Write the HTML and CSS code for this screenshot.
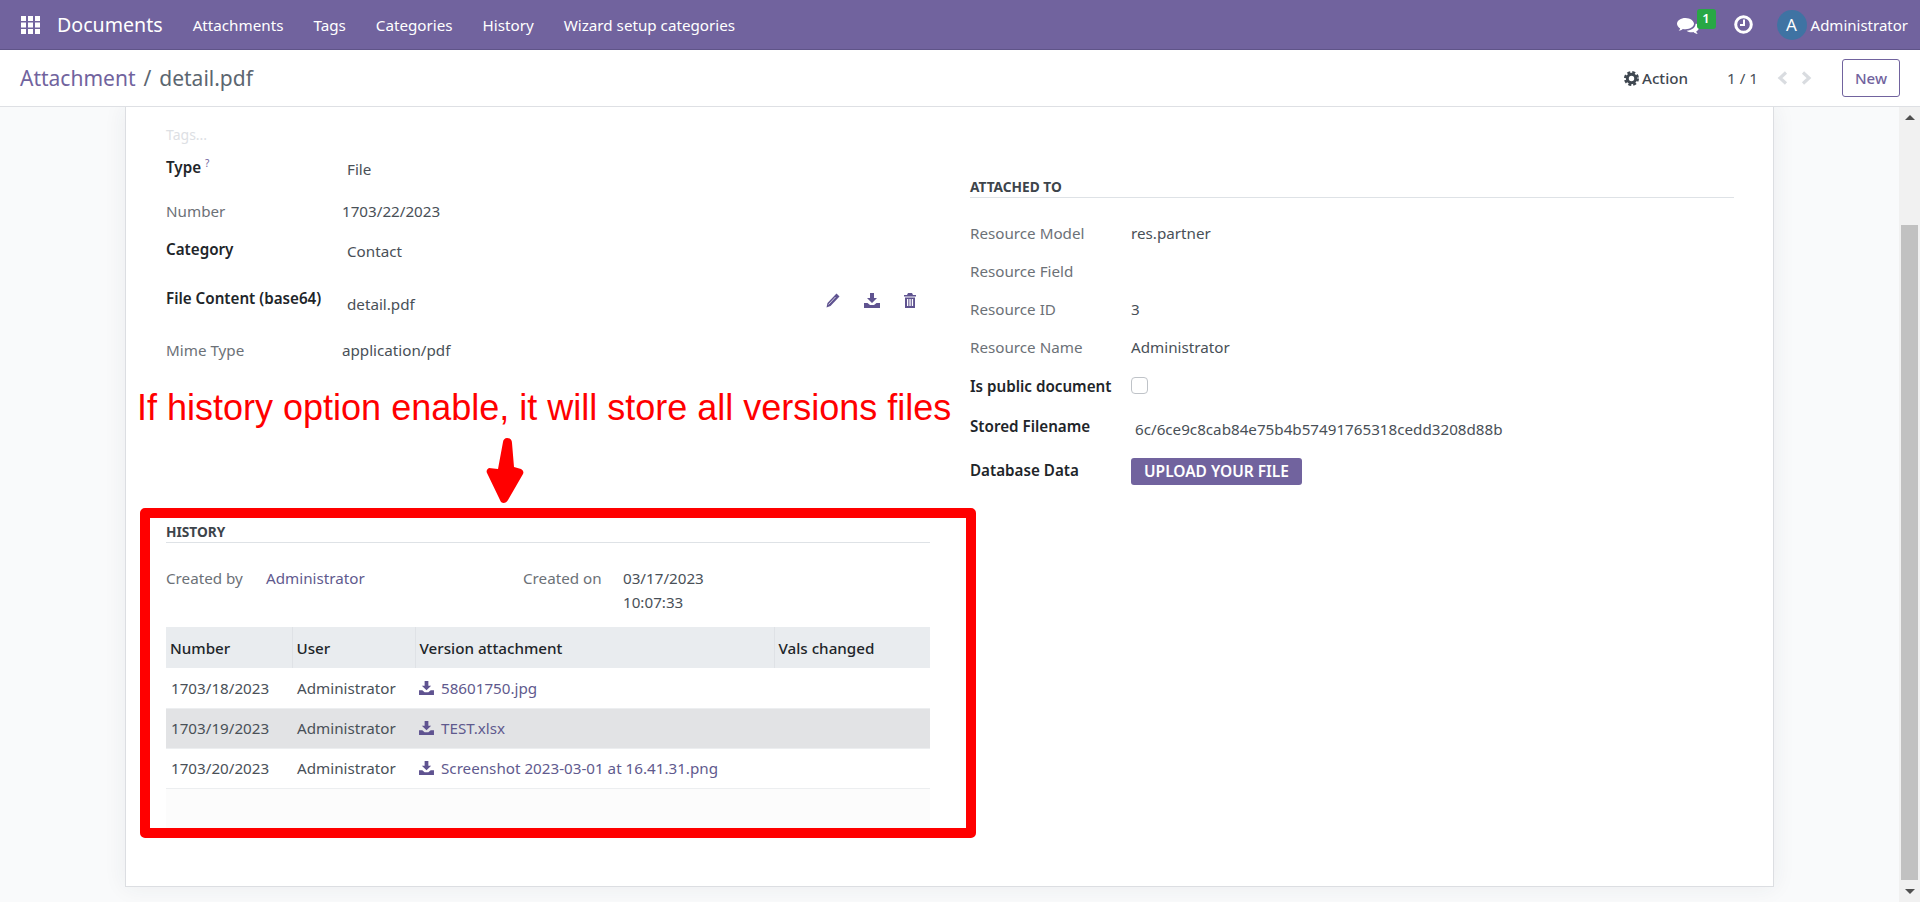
FILE: index.html
```html
<!DOCTYPE html>
<html lang="en">
<head>
    <meta charset="UTF-8">
    <title>Attachment / detail.pdf</title>
    <link rel="stylesheet" href="styles.css">
</head>
<body>
    <!-- top navbar -->
    <header class="navbar">
        <svg class="apps-icon" width="19" height="18" viewBox="0 0 19 18" fill="#fff">
            <rect x="0" y="0" width="5" height="5"/><rect x="7" y="0" width="5" height="5"/><rect x="14" y="0" width="5" height="5"/>
            <rect x="0" y="6.5" width="5" height="5"/><rect x="7" y="6.5" width="5" height="5"/><rect x="14" y="6.5" width="5" height="5"/>
            <rect x="0" y="13" width="5" height="5"/><rect x="7" y="13" width="5" height="5"/><rect x="14" y="13" width="5" height="5"/>
        </svg>
        <span class="brand">Documents</span>
        <nav class="menu">
            <a>Attachments</a>
            <a>Tags</a>
            <a>Categories</a>
            <a>History</a>
            <a>Wizard setup categories</a>
        </nav>
        <div class="systray">
            <div class="chat">
                <svg width="22" height="17" viewBox="0 0 22 17" fill="#fff">
                    <path d="M8.5 0C3.8 0 0 2.6 0 5.8c0 1.9 1.3 3.5 3.2 4.6-.3.9-.8 1.7-1.5 2.4 1.5-.3 3-1 4.1-1.9.9.2 1.8.3 2.7.3 4.7 0 8.5-2.4 8.5-5.4S13.200 0 8.500 0z"/>
                    <path d="M18.600 5.800c.1 3.700-3.800 6.700-9 6.900 1.300 1 3.100 1.500 5 1.500.6 0 1.200-.1 1.800-.2 1 .9 2.600 1.700 4.300 2-.7-.7-1.200-1.600-1.500-2.500 1.700-1 2.800-2.400 2.800-4 0-1.500-1-2.900-2.400-3.700z"/>
                </svg>
                <span class="chat-badge">1</span>
            </div>
            <svg class="clock" width="19" height="19" viewBox="0 0 19 19" fill="none" stroke="#fff">
                <circle cx="9.500" cy="9.500" r="7.800" stroke-width="3"/>
                <path d="M10 4.500v5.500H6" stroke-width="2"/>
            </svg>
            <span class="avatar">A</span>
            <span class="user-name">Administrator</span>
        </div>
    </header>

    <!-- breadcrumb and buttons -->
    <div class="control-panel">
        <div class="breadcrumb"><a>Attachment</a><span class="slash">/</span><span>detail.pdf</span></div>
        <div class="action">
            <svg width="15" height="15" viewBox="0 0 15 15">
                <circle cx="7.500" cy="7.500" r="4.200" fill="none" stroke="#3f4750" stroke-width="3"/>
                <circle cx="7.500" cy="7.500" r="6.300" fill="none" stroke="#3f4750" stroke-width="2.400" stroke-dasharray="2.950 2"/>
            </svg>
            <span>Action</span>
        </div>
        <div class="pager">1 / 1</div>
        <svg class="pager-arrow pager-prev" width="14" height="14" viewBox="0 0 14 14" fill="none" stroke="#d9dce0" stroke-width="3.200"><path d="M10 1.500 4 7l6 5.500"/></svg>
        <svg class="pager-arrow" width="14" height="14" viewBox="0 0 14 14" fill="none" stroke="#d9dce0" stroke-width="3.200"><path d="M4 1.500 10 7l-6 5.500"/></svg>
        <button class="btn-new">New</button>
    </div>

    <div class="content">
        <main class="sheet-wrap">
            <div class="sheet">
                <div class="left-col">
                    <div class="tags-row">Tags...</div>
                    <div class="field type-row">
                        <label class="strong">Type <sup>?</sup></label>
                        <span class="value indent">File</span>
                    </div>
                    <div class="field number-row">
                        <label>Number</label>
                        <span class="value">1703/22/2023</span>
                    </div>
                    <div class="field category-row">
                        <label class="strong">Category</label>
                        <span class="value indent">Contact</span>
                    </div>
                    <div class="field file-row">
                        <label class="strong">File Content (base64)</label>
                        <span class="value indent">detail.pdf</span>
                        <div class="file-actions">
                            <svg width="14" height="15" viewBox="0 0 14 15" fill="#5f5390"><path d="M10.500 0.500 13.500 3.500 4.500 13 0.500 14.500 1.500 10z"/><path d="M2.500 11.500 9.500 4" stroke="#fff" stroke-width=".7"/></svg>
                            <svg width="16" height="15" viewBox="0 0 16 15" fill="#5f5390"><path class="dl" d="M6 0h4v5h3L8 10 3 5h3z"/><path d="M0 10h3.500L6 12h4l2.500-2H16v5H0z"/></svg>
                            <svg width="12" height="15" viewBox="0 0 12 15" fill="#5f5390"><path d="M4 0h4l1 2h3v1.500H0V2h3z"/><path d="M1 4.500h10V15H1zM3 6v7h1.300V6zm2.400 0v7h1.300V6zM7.800 6v7h1.300V6z" fill-rule="evenodd"/></svg>
                        </div>
                    </div>
                    <div class="field mime-row">
                        <label>Mime Type</label>
                        <span class="value">application/pdf</span>
                    </div>

                    <p class="note">If history option enable, it will store all versions files</p>
                    <svg class="note-arrow" width="38" height="67" viewBox="0 0 38 67" fill="#f00">
                        <path d="M21 1c3 0 5 2 5 5l2 24 7 2c2 1 3 3 2 5L22 63c-2 4-7 4-8 0L1 36c-1-2 0-4 2-5l9 1L17 5c0-2 2-4 4-4z"/>
                    </svg>

                    <section class="history-box">
                        <h3 class="group-title">History</h3>
                        <div class="created">
                            <span class="muted">Created by</span>
                            <a>Administrator</a>
                            <span class="muted">Created on</span>
                            <span>03/17/2023<br>10:07:33</span>
                        </div>
                        <table class="versions">
                            <colgroup>
                                <col class="col-number"><col class="col-user"><col class="col-file"><col>
                            </colgroup>
                            <thead>
                                <tr><th>Number</th><th>User</th><th>Version attachment</th><th>Vals changed</th></tr>
                            </thead>
                            <tbody>
                                <tr>
                                    <td>1703/18/2023</td><td>Administrator</td>
                                    <td><a><svg width="15" height="14" viewBox="0 0 16 15" fill="#5f5390"><path d="M6 0h4v5h3L8 10 3 5h3z"/><path d="M0 10h3.500L6 12h4l2.500-2H16v5H0z"/></svg>58601750.jpg</a></td><td></td>
                                </tr>
                                <tr class="shaded">
                                    <td>1703/19/2023</td><td>Administrator</td>
                                    <td><a><svg width="15" height="14" viewBox="0 0 16 15" fill="#5f5390"><path d="M6 0h4v5h3L8 10 3 5h3z"/><path d="M0 10h3.500L6 12h4l2.500-2H16v5H0z"/></svg>TEST.xlsx</a></td><td></td>
                                </tr>
                                <tr>
                                    <td>1703/20/2023</td><td>Administrator</td>
                                    <td><a><svg width="15" height="14" viewBox="0 0 16 15" fill="#5f5390"><path d="M6 0h4v5h3L8 10 3 5h3z"/><path d="M0 10h3.500L6 12h4l2.500-2H16v5H0z"/></svg>Screenshot 2023-03-01 at 16.41.31.png</a></td><td></td>
                                </tr>
                            </tbody>
                        </table>
                        <div class="table-foot"></div>
                    </section>
                </div>

                <div class="right-col">
                    <h3 class="group-title">Attached To</h3>
                    <div class="rfield"><label>Resource Model</label><span class="value">res.partner</span></div>
                    <div class="rfield"><label>Resource Field</label></div>
                    <div class="rfield"><label>Resource ID</label><span class="value">3</span></div>
                    <div class="rfield"><label>Resource Name</label><span class="value">Administrator</span></div>
                    <div class="rfield"><label class="strong">Is public document</label><span class="checkbox"></span></div>
                    <div class="rfield stored-row"><label class="strong">Stored Filename</label><span class="value">6c/6ce9c8cab84e75b4b57491765318cedd3208d88b</span></div>
                    <div class="rfield db-row"><label class="strong">Database Data</label><button class="btn-upload">Upload your file</button></div>
                </div>
            </div>
        </main>

        <!-- page scrollbar -->
        <div class="scrollbar">
            <div class="scroll-btn"><i class="arrow-up"></i></div>
            <div class="scroll-space"></div>
            <div class="scroll-thumb"></div>
            <div class="scroll-btn"><i class="arrow-down"></i></div>
        </div>
    </div>
</body>
</html>
```

FILE: styles.css
```css
* {
    box-sizing: border-box;
}
html, body {
    height: 100%;
}
body {
    margin: 0;
    display: flex;
    flex-direction: column;
    overflow: hidden;
    font-family: "Noto Sans", "Open Sans", sans-serif;
    font-size: 15.2px;
    color: #495057;
    background: #f9fafb;
}
a {
    color: #5f5a8e;
}

/* navbar */
.navbar {
    flex: 0 0 50px;
    display: flex;
    align-items: center;
    background: #71639e;
    border-bottom: 1px solid #5f5488;
    color: #fff;
    padding: 0 12px 0 21px;
}
.apps-icon {
    margin-right: 17px;
}
.brand {
    font-size: 19.6px;
    margin-right: 30px;
}
.menu {
    display: flex;
    gap: 30px;
}
.menu a {
    color: #fff;
}
.systray {
    margin-left: auto;
    display: flex;
    align-items: center;
}
.chat {
    position: relative;
    width: 40px;
    height: 30px;
    padding-top: 8px;
}
.chat-badge {
    position: absolute;
    left: 20px;
    top: -1px;
    width: 19px;
    height: 20px;
    border-radius: 3px;
    background: #28a745;
    font-size: 13px;
    font-weight: 600;
    line-height: 19px;
    text-align: center;
}
.clock {
    margin-left: 17px;
}
.avatar {
    width: 30px;
    height: 30px;
    margin-left: 24px;
    border-radius: 50%;
    background: #3f73a3;
    text-align: center;
    font-size: 17px;
    line-height: 30px;
}
.user-name {
    margin-left: 4px;
    font-size: 15px;
}

/* control panel */
.control-panel {
    flex: 0 0 57px;
    display: flex;
    align-items: center;
    background: #fff;
    border-bottom: 1px solid #dee0e4;
    padding: 0 20px;
}
.breadcrumb {
    font-size: 21px;
    margin-right: auto;
}
.breadcrumb a {
    color: #71639e;
}
.breadcrumb span {
    color: #5c6670;
}
.breadcrumb .slash {
    margin: 0 8px;
}
.action {
    display: flex;
    align-items: center;
    gap: 3px;
    font-weight: 500;
    color: #3f4750;
}
.pager {
    margin-left: 39px;
    margin-right: 18px;
}
.pager-arrow {
    margin-right: 12px;
}
.pager-prev {
    margin-right: 9px;
}
.btn-new {
    width: 58px;
    height: 38px;
    margin-left: 17px;
    background: #fff;
    border: 1px solid #71639e;
    border-radius: 3px;
    color: #71639e;
    font: 500 15px "Noto Sans", sans-serif;
}

/* page content */
.content {
    flex: 1;
    display: flex;
    min-height: 0;
}
.sheet-wrap {
    flex: 1;
    padding: 0 125px;
    overflow: hidden;
}
.sheet {
    height: 780px;
    display: flex;
    padding: 16px 0 0 14px;
    background: #fff;
    border: 1px solid #dcdee2;
    border-top: 0;
    box-shadow: 0 0 22px rgba(40, 50, 70, .07);
}
label {
    color: #6c7177;
}
label.strong {
    color: #212529;
    font-weight: 600;
}
.muted {
    color: #6c7177;
}

/* left column */
.left-col {
    flex: 0 0 836px;
}
.tags-row {
    height: 24px;
    padding-left: 26px;
    font-size: 14px;
    line-height: 24px;
    color: #dde0e4;
}
.field {
    display: flex;
    align-items: center;
    padding-left: 26px;
}
.field label {
    flex: 0 0 176px;
}
.field sup {
    color: #71639e;
    font-size: 10px;
    font-weight: 400;
}
.indent {
    margin-left: 5px;
    padding-top: 4px;
}
.type-row {
    height: 44px;
    padding-bottom: 5px;
}
.number-row {
    height: 42px;
    padding-bottom: 2px;
}
.category-row {
    height: 36px;
    padding-bottom: 4px;
}
.file-row {
    height: 66px;
    padding-right: 60px;
    padding-bottom: 3px;
}
.file-row label {
    margin-bottom: 6px;
}
.file-row .indent {
    padding-top: 6px;
}
.file-actions {
    margin-left: auto;
    display: flex;
    align-items: center;
    gap: 24px;
}
.mime-row {
    height: 32px;
    padding-bottom: 2px;
}

/* annotation */
.note {
    margin: 21px 0 0 -3px;
    font-family: "Liberation Sans", Arial, sans-serif;
    font-size: 36px;
    line-height: 40px;
    color: #f00;
    white-space: nowrap;
}
.note-arrow {
    display: block;
    margin: 9px 0 0 346px;
}
.history-box {
    margin-top: 4px;
    height: 330px;
    padding: 4px 36px 0 16px;
    border: 10px solid #f00;
    border-radius: 5px;
    overflow: hidden;
}
.group-title {
    margin: 0;
    padding-bottom: 1px;
    border-bottom: 1px solid #dee2e6;
    font-size: 13.700px;
    font-weight: 700;
    line-height: 19px;
    text-transform: uppercase;
    color: #3d444b;
}
.created {
    display: grid;
    grid-template-columns: 100px 257px 100px 1fr;
    margin-top: 24px;
    line-height: 23.500px;
}
.versions {
    width: 100%;
    margin-top: 13px;
    border-collapse: collapse;
    table-layout: fixed;
}
.col-number {
    width: 126px;
}
.col-user {
    width: 123px;
}
.col-file {
    width: 359px;
}
.versions th {
    height: 41px;
    padding: 0 4px;
    background: #e9ecef;
    border-left: 1px solid #dfe2e6;
    color: #212529;
    font-weight: 500;
    text-align: left;
}
.versions th:first-child {
    border-left: 0;
}
.versions td {
    height: 40px;
    padding: 0 5px;
    border-bottom: 1px solid #eceef0;
    white-space: nowrap;
}
.versions td:nth-child(3) {
    padding-left: 4px;
}
.versions svg {
    margin-right: 7px;
    vertical-align: -1px;
}
.shaded td {
    background: #e2e3e5;
}
.table-foot {
    height: 40px;
    background: #fcfcfc;
}

/* right column */
.right-col {
    flex: 0 0 764px;
    margin-left: -6px;
    padding-top: 54px;
}
.rfield {
    display: flex;
    align-items: center;
    height: 38.250px;
}
.right-col .group-title {
    margin-bottom: 15.500px;
}
.rfield label {
    flex: 0 0 161px;
}
.checkbox {
    width: 17px;
    height: 17px;
    border: 1px solid #bfc3c8;
    border-radius: 4px;
}
.stored-row {
    height: 43px;
}
.stored-row .value {
    margin-left: 4px;
    padding-top: 6px;
}
.db-row {
    height: 47px;
}
.db-row label {
    margin-bottom: 3px;
}
.btn-upload {
    width: 171px;
    height: 27px;
    padding: 0;
    background: #71639e;
    border: 0;
    border-radius: 3px;
    color: #fff;
    font: 600 15.500px "Noto Sans", sans-serif;
    text-transform: uppercase;
}

/* scrollbar */
.scrollbar {
    flex: 0 0 21px;
    display: flex;
    flex-direction: column;
    background: #f1f1f1;
}
.scroll-btn {
    height: 22px;
    display: flex;
    align-items: center;
    justify-content: center;
}
.scroll-space {
    height: 96px;
}
.scroll-thumb {
    height: 656px;
    margin: 0 2px;
    background: #c1c1c1;
}
.arrow-up {
    border: 5px solid transparent;
    border-top: 0;
    border-bottom: 5px solid #505050;
}
.arrow-down {
    border: 5px solid transparent;
    border-bottom: 0;
    border-top: 5px solid #505050;
}
```
